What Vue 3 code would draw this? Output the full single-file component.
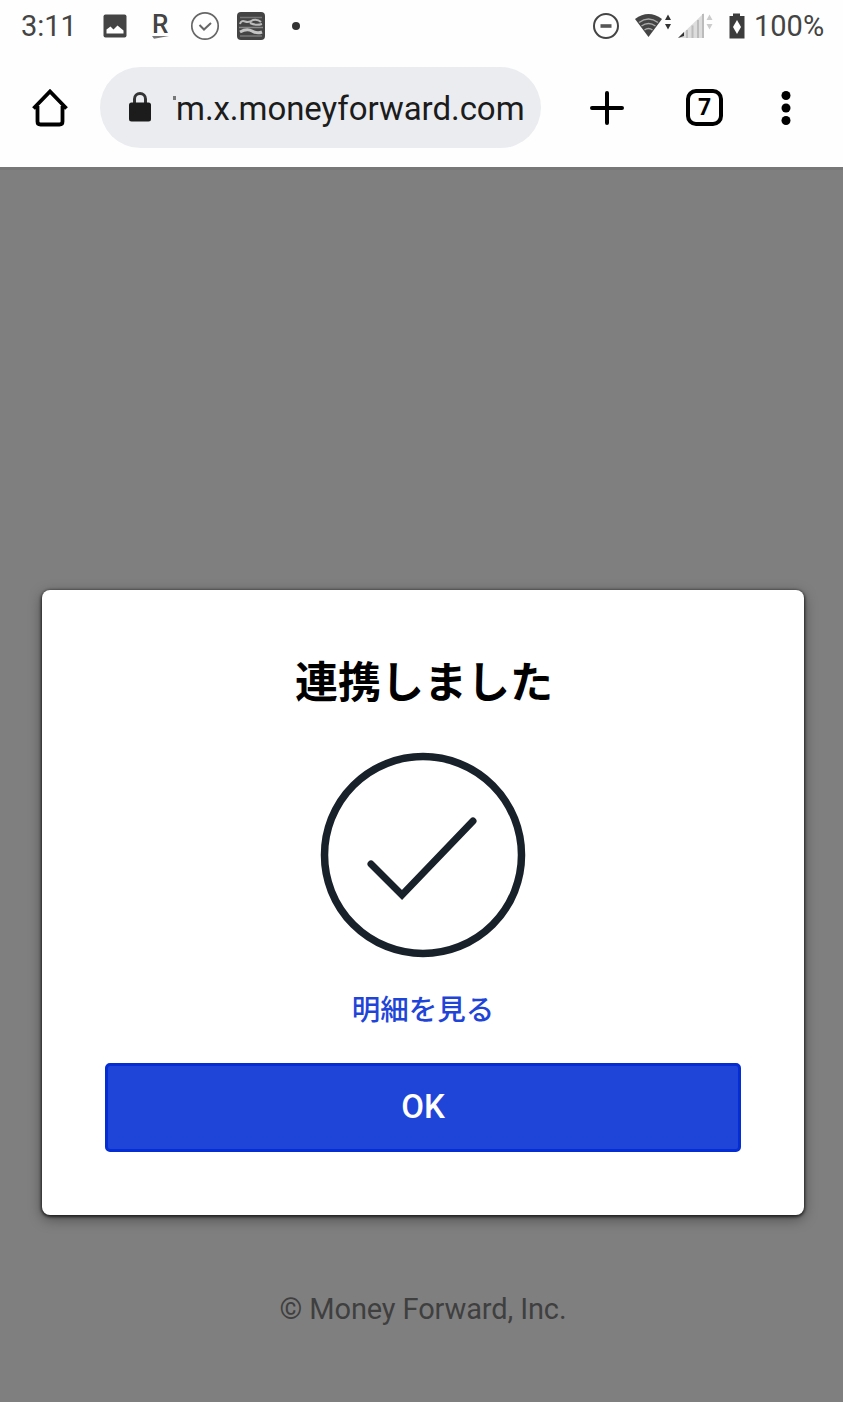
<script setup>
import { ref } from 'vue'

const time = ref('3:11')
const battery = ref(100)
const tabs = ref(7)
const url = 'm.x.moneyforward.com'
</script>

<template>
  <div class="screen">
    <header class="status">
      <span class="time">{{ time }}</span>
      <svg class="photo" width="24" height="24" viewBox="0 0 24 24">
        <rect x="0.500" y="0.500" width="23" height="23" rx="2" fill="#444" />
        <path d="M3.500 19.500v-4l4-3 3 3 4-4 6 5v3z" fill="#fff" />
      </svg>
      <span class="rakuten">
        R
        <svg width="18" height="4" viewBox="0 0 18 4"><path d="M0 1h17l-8 1.5-7 1.2z" fill="#777" /></svg>
      </span>
      <svg class="done" width="30" height="30" viewBox="0 0 30 30" fill="none" stroke="#666">
        <circle cx="15" cy="15" r="13.2" stroke-width="1.7" />
        <path d="M9.5 14l4.5 4.5 7-6.5" stroke-width="2" />
      </svg>
      <svg class="card" width="30" height="30" viewBox="0 0 30 30">
        <rect x="1" y="1" width="28" height="28" rx="4" fill="#444" />
        <path d="M4 6.500h22" stroke="#777" stroke-width="1.500" />
        <path d="M4 13q1-4 5-2.500t8-1.500q5-1 8 2M14 12q6 3 12 1" fill="none" stroke="#bbb" stroke-width="2" />
        <path d="M3 16.500h24" stroke="#888" stroke-width="1.500" />
        <path d="M4 21q7-4 12-1t10 1" fill="none" stroke="#c4c4c4" stroke-width="3" />
        <path d="M4 25h22" stroke="#777" stroke-width="1.500" />
      </svg>
      <span class="dot"></span>

      <div class="system">
        <svg width="28" height="28" viewBox="0 0 28 28" fill="none" stroke="#444">
          <circle cx="14" cy="14" r="12" stroke-width="2" />
          <path d="M8.500 14h11" stroke="#555" stroke-width="3.600" />
        </svg>
        <svg class="wifi" width="38" height="26" viewBox="0 0 38 26">
          <path d="M0 6Q13.500-4 27 6L13.500 24z" fill="#444" />
          <path d="M4 9.500q9.500-7 19 0M6.500 13q7-5 14 0M9.500 17q4-3 8 0" fill="none" stroke="#aaa" stroke-width="1.500" />
          <path d="M33 1.500l3 5.500h-6zM33 16.500l3-5.500h-6z" fill="#333" />
        </svg>
        <svg class="signal" width="36" height="26" viewBox="0 0 36 26">
          <path d="M0 25L26 0v25z" fill="#ddd" />
          <path d="M9 25v-8M14.500 25V12.500M20 25V7M25 25V1" stroke="#bcbcbc" stroke-width="2" />
          <path d="M0 25l6-6v4z" fill="#333" />
          <path d="M31.500 1.500l3 5.500h-6zM31.500 16.500l3-5.500h-6z" fill="#ccc" />
        </svg>
        <svg class="battery" width="18" height="28" viewBox="0 0 18 28">
          <path d="M5 1.500h7V4h4.500v22.500h-15V4H5z" fill="#3c3c3c" />
          <path d="M9 8l4 7-4 7-4-7z" fill="#fff" />
        </svg>
        <span class="percent">{{ battery }}%</span>
      </div>
    </header>

    <nav class="toolbar">
      <svg class="home" width="38" height="40" viewBox="0 0 38 40">
        <path d="M2.500 20.500L19 3.500 35.500 20.500M6.500 18v15.500q0 3 3 3h19q3 0 3-3V18" fill="none" stroke="#000" stroke-width="3.800" />
      </svg>
      <div class="address">
        <svg class="lock" width="24" height="32" viewBox="0 0 24 32">
          <path d="M6.500 14V8a5.500 5.500 0 0 1 11 0V14" fill="none" stroke="#333" stroke-width="3" />
          <rect x="1" y="11.500" width="22" height="19" rx="2.500" fill="#1c1c1c" />
        </svg>
        <i class="cut"></i>
        <span class="url">{{ url }}</span>
      </div>
      <svg class="plus" width="34" height="34" viewBox="0 0 34 34">
        <path d="M17 2v30M2 17h30" stroke="#000" stroke-width="4" stroke-linecap="round" />
      </svg>
      <div class="tabs">{{ tabs }}</div>
      <svg class="more" width="10" height="36" viewBox="0 0 10 36">
        <circle cx="5" cy="5.500" r="4.500" />
        <circle cx="5" cy="18" r="4.500" />
        <circle cx="5" cy="30.500" r="4.500" />
      </svg>
    </nav>

    <main class="page">
      <section class="modal">
        <h1>連携しました</h1>
        <svg class="check" width="206" height="206" viewBox="0 0 206 206" fill="none" stroke="#18202a">
          <circle cx="103" cy="103" r="98.500" stroke-width="7.500" />
          <path d="M51 112l31 31 71-74" stroke-width="7" stroke-linecap="round" />
        </svg>
        <a class="link">明細を見る</a>
        <button class="ok">OK</button>
      </section>
      <footer>© Money Forward, Inc.</footer>
    </main>
  </div>
</template>

<style>
body {
  margin: 0;
}
</style>

<style scoped>
.screen {
  display: flex;
  flex-direction: column;
  width: 843px;
  height: 1402px;
  background: #fefefe;
  font-family: Roboto, "Noto Sans CJK JP", sans-serif;
  overflow: hidden;
}

svg {
  display: block;
  flex: none;
}

.status {
  display: flex;
  align-items: center;
  height: 51px;
  padding: 0 20px 0 21px;
  color: #444;
  font-size: 29px;
  line-height: 34px;
}

.time {
  width: 56px;
  padding-top: 1px;
  white-space: nowrap;
}

.photo {
  margin-left: 26px;
}

.rakuten {
  width: 18px;
  margin-left: 25px;
  font-size: 26px;
  font-weight: 500;
  line-height: 22px;
}

.done {
  margin-left: 20px;
}

.card {
  margin-left: 16px;
}

.dot {
  width: 8px;
  height: 8px;
  margin-left: 26px;
  border-radius: 50%;
  background: #333;
}

.system {
  display: flex;
  align-items: center;
  margin-left: auto;
}

.wifi {
  margin-left: 15px;
}

.signal {
  margin-left: 5px;
}

.battery {
  margin-left: 14px;
}

.percent {
  width: 69px;
  margin-left: 8px;
  padding-top: 1px;
  white-space: nowrap;
}

.toolbar {
  display: flex;
  align-items: center;
  height: 113px;
  padding: 0 51px 3px 31px;
}

.address {
  display: flex;
  align-items: center;
  box-sizing: border-box;
  width: 441px;
  height: 81px;
  margin-left: 31px;
  padding-left: 28px;
  border-radius: 41px;
  background: #ebecf0;
}

.lock {
  margin-bottom: 2px;
}

.cut {
  width: 3px;
  height: 4px;
  margin: -20px 0 0 21px;
  background: #777;
}

.url {
  padding-top: 2px;
  font-size: 33px;
  line-height: 40px;
  letter-spacing: -0.05px;
  color: #1c1c1c;
  white-space: nowrap;
}

.plus {
  margin-left: 49px;
}

.tabs {
  box-sizing: border-box;
  width: 37px;
  height: 37px;
  margin-left: 62px;
  border: 4px solid #000;
  border-radius: 10px;
  font-size: 23px;
  font-weight: 700;
  line-height: 29px;
  text-align: center;
}

.more {
  margin-left: 58px;
}

.page {
  display: flex;
  flex-direction: column;
  align-items: center;
  flex: 1;
  padding: 420px 39px 0 42px;
  border-top: 3px solid #777;
  background: #7f7f7f;
}

.modal {
  display: flex;
  flex-direction: column;
  align-items: center;
  box-sizing: border-box;
  width: 762px;
  height: 625px;
  padding: 61px 63px 0;
  border-radius: 8px;
  background: #fff;
  box-shadow: 0 1px 3px 1px rgba(0, 0, 0, 0.65), 0 4px 14px rgba(0, 0, 0, 0.4);
}

h1 {
  margin: 0;
  padding-left: 2px;
  font-size: 43px;
  font-weight: 700;
  line-height: 64px;
  color: #000;
}

.check {
  margin-top: 37px;
}

.link {
  margin-top: 33px;
  font-size: 28.5px;
  font-weight: 500;
  line-height: 40px;
  color: #1f45d8;
}

.ok {
  width: 636px;
  height: 89px;
  margin-top: 32px;
  padding: 0 0 2px;
  border: 3px solid #052dd4;
  border-radius: 5px;
  background: #1f45d8;
  color: #fff;
  font-family: inherit;
  font-size: 33px;
  font-weight: 500;
}

footer {
  margin-top: 77px;
  font-size: 29px;
  line-height: 34px;
  color: #3f3f3f;
  letter-spacing: -0.12px;
}
</style>
